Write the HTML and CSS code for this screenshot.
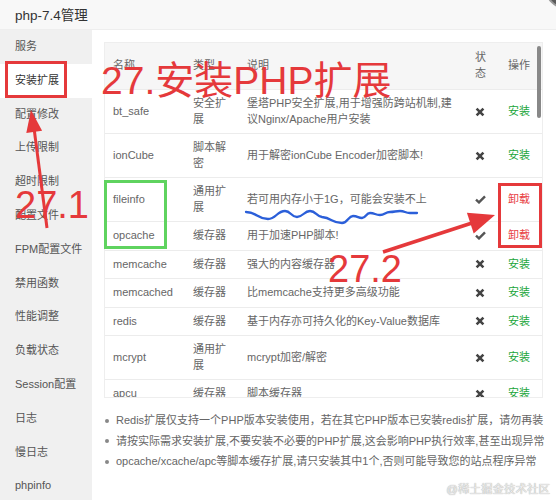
FILE: index.html
```html
<!DOCTYPE html>
<html lang="zh">
<head>
<meta charset="utf-8">
<title>php-7.4管理</title>
<link rel="stylesheet" href="styles.css">
</head>
<body>
<div class="page">
  <header class="topbar">
    <span class="title">php-7.4管理</span>
    <span class="close"></span>
  </header>
  <div class="layout">
    <nav class="side">
      <div class="nav-item">服务</div>
      <div class="nav-item active">安装扩展</div>
      <div class="nav-item">配置修改</div>
      <div class="nav-item">上传限制</div>
      <div class="nav-item">超时限制</div>
      <div class="nav-item">配置文件</div>
      <div class="nav-item">FPM配置文件</div>
      <div class="nav-item">禁用函数</div>
      <div class="nav-item">性能调整</div>
      <div class="nav-item">负载状态</div>
      <div class="nav-item">Session配置</div>
      <div class="nav-item">日志</div>
      <div class="nav-item">慢日志</div>
      <div class="nav-item">phpinfo</div>
    </nav>
    <main class="main">
      <div class="tbl-wrap">
        <table class="tbl">
          <colgroup>
            <col class="c-name"><col class="c-type"><col class="c-desc"><col class="c-status"><col class="c-op">
          </colgroup>
          <thead>
            <tr><th>名称</th><th>类型</th><th>说明</th><th>状态</th><th>操作</th></tr>
          </thead>
          <tbody>
            <tr>
              <td>bt_safe</td><td>安全扩展</td><td>堡塔PHP安全扩展,用于增强防跨站机制,建议Nginx/Apache用户安装</td>
              <td><svg class="ico" width="10" height="10" viewBox="0 0 10 10"><path d="M1.6 1.6L8.4 8.4M8.4 1.6L1.6 8.4" stroke="#444" stroke-width="2.6"/></svg></td>
              <td><span class="act-install">安装</span></td>
            </tr>
            <tr>
              <td>ionCube</td><td>脚本解密</td><td>用于解密ionCube Encoder加密脚本!</td>
              <td><svg class="ico" width="10" height="10" viewBox="0 0 10 10"><path d="M1.6 1.6L8.4 8.4M8.4 1.6L1.6 8.4" stroke="#444" stroke-width="2.6"/></svg></td>
              <td><span class="act-install">安装</span></td>
            </tr>
            <tr>
              <td>fileinfo</td><td>通用扩展</td><td>若可用内存小于1G，可能会安装不上</td>
              <td><svg class="ico" width="11" height="9" viewBox="0 0 11 9"><path d="M1 4.6L4 7.4L10 1.4" fill="none" stroke="#555" stroke-width="2.4"/></svg></td>
              <td><span class="act-remove">卸载</span></td>
            </tr>
            <tr>
              <td>opcache</td><td>缓存器</td><td>用于加速PHP脚本!</td>
              <td><svg class="ico" width="11" height="9" viewBox="0 0 11 9"><path d="M1 4.6L4 7.4L10 1.4" fill="none" stroke="#555" stroke-width="2.4"/></svg></td>
              <td><span class="act-remove">卸载</span></td>
            </tr>
            <tr>
              <td>memcache</td><td>缓存器</td><td>强大的内容缓存器</td>
              <td><svg class="ico" width="10" height="10" viewBox="0 0 10 10"><path d="M1.6 1.6L8.4 8.4M8.4 1.6L1.6 8.4" stroke="#444" stroke-width="2.6"/></svg></td>
              <td><span class="act-install">安装</span></td>
            </tr>
            <tr>
              <td>memcached</td><td>缓存器</td><td>比memcache支持更多高级功能</td>
              <td><svg class="ico" width="10" height="10" viewBox="0 0 10 10"><path d="M1.6 1.6L8.4 8.4M8.4 1.6L1.6 8.4" stroke="#444" stroke-width="2.6"/></svg></td>
              <td><span class="act-install">安装</span></td>
            </tr>
            <tr>
              <td>redis</td><td>缓存器</td><td>基于内存亦可持久化的Key-Value数据库</td>
              <td><svg class="ico" width="10" height="10" viewBox="0 0 10 10"><path d="M1.6 1.6L8.4 8.4M8.4 1.6L1.6 8.4" stroke="#444" stroke-width="2.6"/></svg></td>
              <td><span class="act-install">安装</span></td>
            </tr>
            <tr>
              <td>mcrypt</td><td>通用扩展</td><td>mcrypt加密/解密</td>
              <td><svg class="ico" width="10" height="10" viewBox="0 0 10 10"><path d="M1.6 1.6L8.4 8.4M8.4 1.6L1.6 8.4" stroke="#444" stroke-width="2.6"/></svg></td>
              <td><span class="act-install">安装</span></td>
            </tr>
            <tr>
              <td>apcu</td><td>缓存器</td><td>脚本缓存器</td>
              <td><svg class="ico" width="10" height="10" viewBox="0 0 10 10"><path d="M1.6 1.6L8.4 8.4M8.4 1.6L1.6 8.4" stroke="#444" stroke-width="2.6"/></svg></td>
              <td><span class="act-install">安装</span></td>
            </tr>
          </tbody>
        </table>
        <div class="scrollbar"></div>
      </div>
      <ul class="tips">
        <li>Redis扩展仅支持一个PHP版本安装使用，若在其它PHP版本已安装redis扩展，请勿再装</li>
        <li>请按实际需求安装扩展,不要安装不必要的PHP扩展,这会影响PHP执行效率,甚至出现异常</li>
        <li>opcache/xcache/apc等脚本缓存扩展,请只安装其中1个,否则可能导致您的站点程序异常</li>
      </ul>
    </main>
  </div>

  <svg class="annot" width="556" height="500" viewBox="0 0 556 500">
    <rect x="6.5" y="62.5" width="59" height="34" fill="none" stroke="#e5393b" stroke-width="3"/>
    <line x1="47" y1="228" x2="34" y2="128" stroke="#e5393b" stroke-width="3"/>
    <polygon points="31,110 42.1,130.7 26.3,133" fill="#e5393b"/>
    <rect x="105.5" y="181.5" width="60" height="66" fill="none" stroke="#5fd35f" stroke-width="3"/>
    <rect x="499.5" y="184.5" width="41" height="62" fill="none" stroke="#e5393b" stroke-width="3"/>
    <line x1="383" y1="252" x2="472" y2="223" stroke="#e5393b" stroke-width="3.5"/>
    <polygon points="495,215 473.7,233.5 466.9,212.7" fill="#e5393b"/>
    <path d="M246 212 C257 212 257 219 268 219 C276 219 277 211 285 211 C291 211 291 217 297 217 C303 217 304 211 310 211 C316 211 316 216 322 217 C332 218 332 223 342 223 C348 223 348 216 353 216 C358 216 358 218 362 218 C366 218 366 213 370 213 C375 213 375 215 380 215 C385 215 385 212 390 212 C395 212 395 211 400 211 C405 211 405 213 410 213 L417 213" fill="none" stroke="#2b5fd9" stroke-width="2.3" stroke-linecap="round"/>
  </svg>
  <div class="note note-title">27.安装PHP扩展</div>
  <div class="note note-a">27.1</div>
  <div class="note note-b">27.2</div>
  <div class="watermark">@稀土掘金技术社区</div>
</div>
</body>
</html>
```

FILE: styles.css
```css
* { box-sizing: border-box; }
html, body { margin: 0; padding: 0; }
body {
  font-family: "Liberation Sans", "Noto Sans CJK SC", sans-serif;
  background: #fff;
  color: #666;
}
.page {
  position: relative;
  width: 556px;
  height: 500px;
  overflow: hidden;
}
.topbar {
  position: relative;
  height: 30px;
  background: #f8f8f8;
  border-bottom: 1px solid #eee;
  padding-left: 15px;
  display: flex;
  align-items: center;
  padding-bottom: 2px;
}
.title {
  font-size: 13.5px;
  color: #333;
}
.close {
  position: absolute;
  left: 545px;
  top: -33px;
  width: 42px;
  height: 42px;
  border-radius: 50%;
  background: #5a5a5a;
  border: 2px solid #999;
}
.layout {
  display: flex;
  height: 470px;
}
.side {
  width: 92px;
  flex: none;
  background: #f0f0f0;
}
.nav-item {
  height: 33.8px;
  line-height: 33.8px;
  padding-left: 15px;
  font-size: 11px;
  color: #555;
  white-space: nowrap;
}
.nav-item.active {
  background: #fff;
  color: #333;
}
.main {
  flex: 1;
  padding: 12px 13px 0 12px;
  min-width: 0;
}
.tbl-wrap {
  position: relative;
  height: 356px;
  border: 1px solid #eee;
  overflow: hidden;
}
.tbl {
  width: 100%;
  table-layout: fixed;
  border-collapse: collapse;
  font-size: 11px;
  color: #666;
}
.c-name { width: 80px; }
.c-type { width: 54px; }
.c-desc { width: 228px; }
.c-status { width: 33px; }
.c-op { width: 42px; }
.tbl th {
  background: #f6f6f6;
  font-weight: normal;
  text-align: left;
  padding: 7px 8px 8px;
  line-height: 15.5px;
  color: #666;
  vertical-align: middle;
}
.tbl td {
  padding: 6px 8px;
  line-height: 15.5px;
  border-top: 1px solid #ececec;
  vertical-align: middle;
  word-break: break-all;
}
.ico { display: block; }
.act-install { color: #20a53a; }
.act-remove { color: #e8403f; }
.scrollbar {
  position: absolute;
  right: 1px;
  top: 3px;
  width: 4px;
  height: 72px;
  border-radius: 2px;
  background: #888;
}
.tips {
  list-style: none;
  margin: 12px 0 0;
  padding: 0;
  font-size: 11px;
  color: #666;
}
.tips li {
  position: relative;
  padding-left: 12px;
  line-height: 20.5px;
  white-space: nowrap;
}
.tips li::before {
  content: "";
  position: absolute;
  left: 1px;
  top: 8.5px;
  width: 4px;
  height: 4px;
  border-radius: 50%;
  background: #888;
}
.annot {
  position: absolute;
  left: 0;
  top: 0;
  pointer-events: none;
}
.note {
  position: absolute;
  font-size: 38px;
  line-height: 38px;
  color: #e5393b;
  white-space: nowrap;
  font-family: "Liberation Sans", "Noto Sans CJK SC", sans-serif;
}
.note-title { left: 101px; top: 62px; font-size: 39px; }
.note-a { left: 15px; top: 186px; }
.note-b { left: 328px; top: 250px; }
.watermark {
  position: absolute;
  right: 6px;
  bottom: 4px;
  font-size: 11.5px;
  color: #ececec;
  text-shadow: 0 0 1px #888;
}
```
